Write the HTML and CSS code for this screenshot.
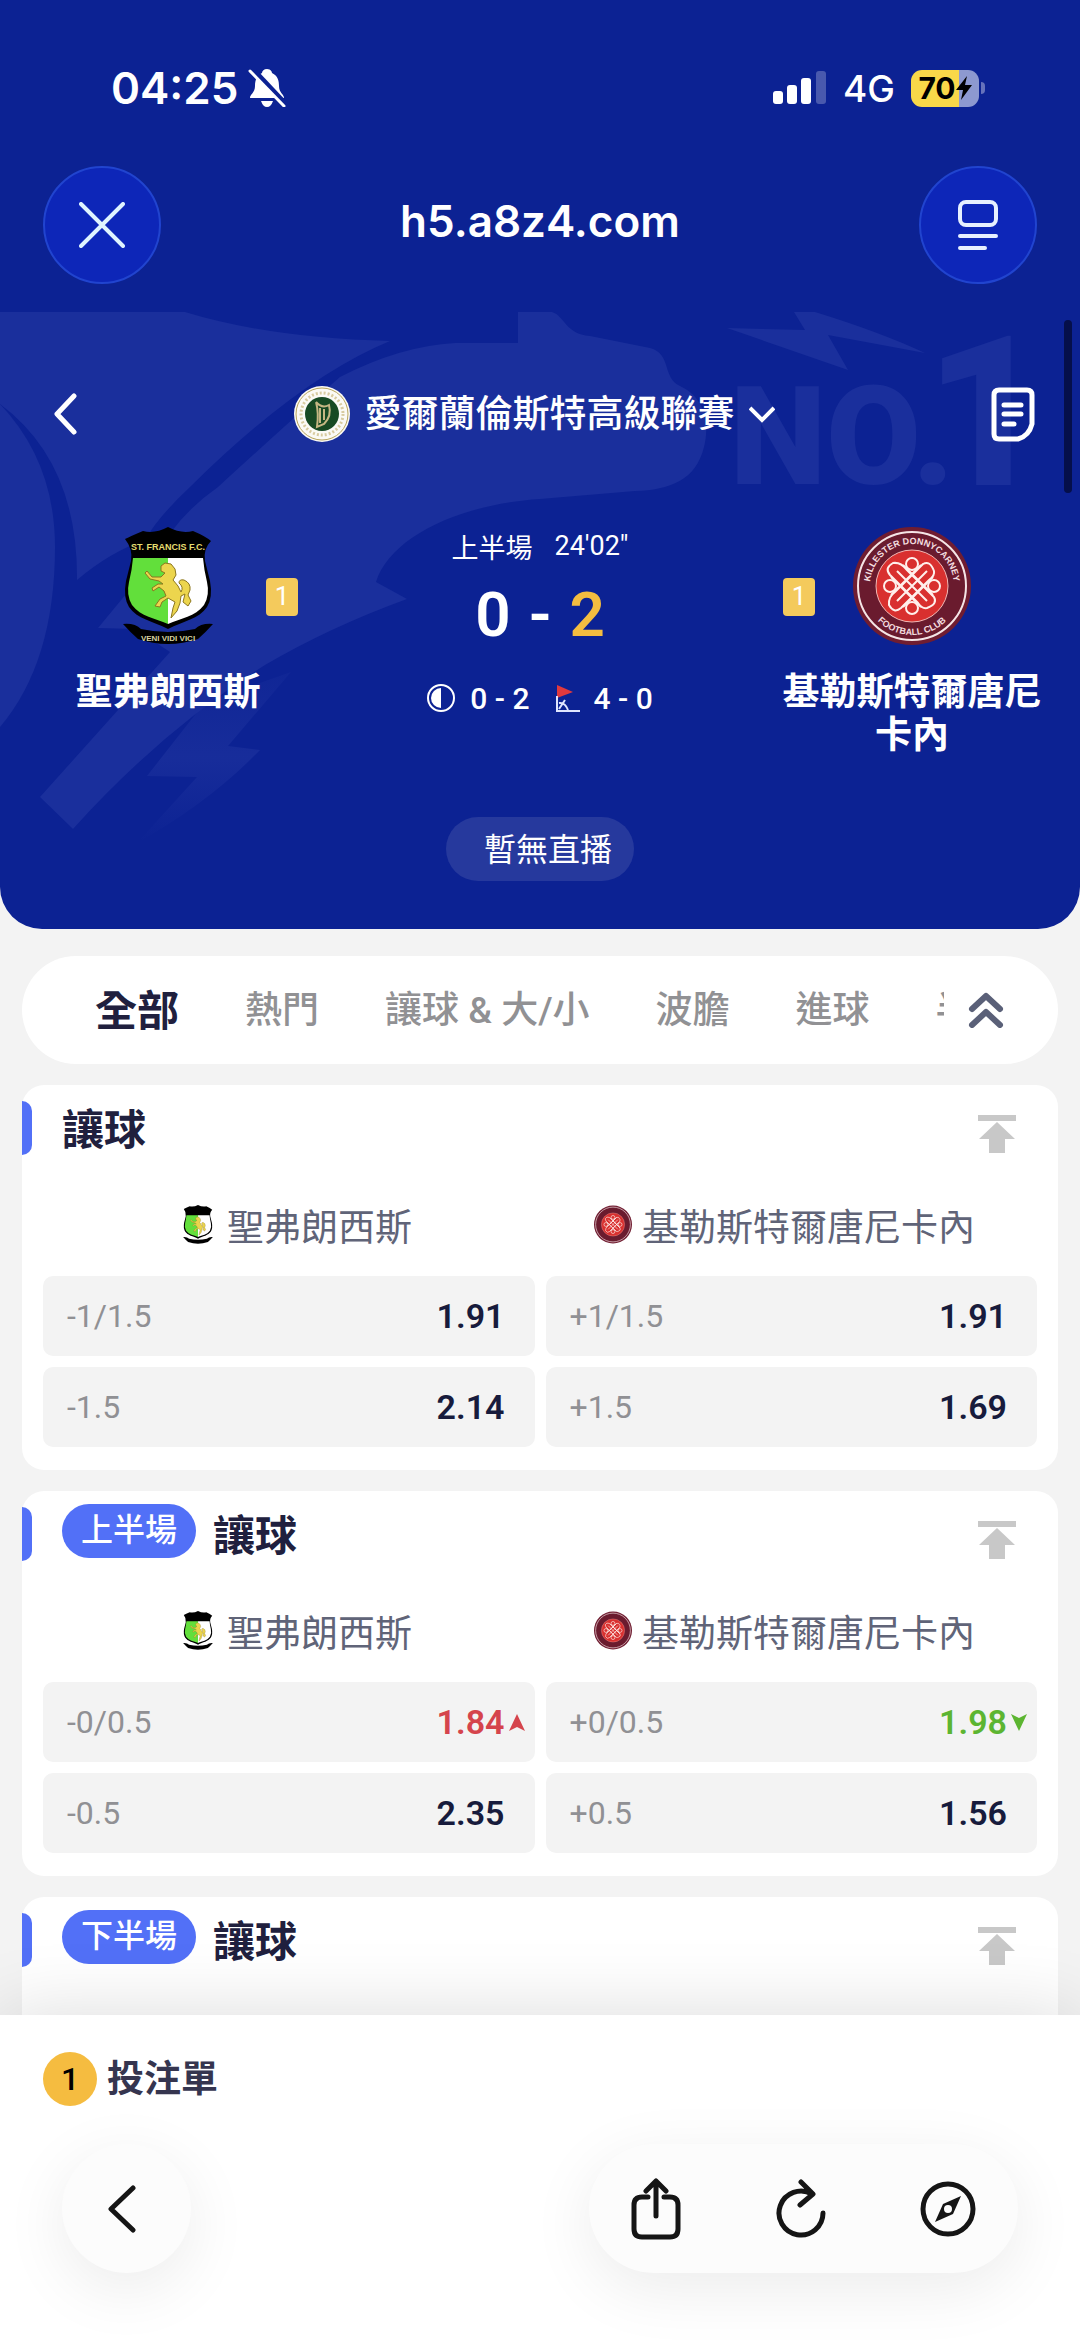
FILE: index.html
```html
<!DOCTYPE html>
<html lang="zh-Hant">
<head>
    <meta charset="UTF-8">
    <meta name="viewport" content="width=device-width, initial-scale=1.0">
    <title>h5.a8z4.com</title>
    <link rel="stylesheet" href="styles.css">
</head>
<body>
<!-- shared icons -->
<svg class="defs" width="0" height="0" aria-hidden="true">
    <symbol id="francis" viewBox="0 0 90 118">
        <path d="M2 12Q8 9 20 4Q32 7 45 0Q58 7 70 4Q82 9 88 14Q80 22 82 34Q84 42 87 54Q90 70 84 80C76 92 60 94 45 102C30 94 14 92 6 80Q0 70 3 54Q6 42 8 34Q10 22 2 12Z" fill="#000"/>
        <path d="M10 31H45V97C32 91 18 90 9 78Q3 68 6 55Q9 43 10 31Z" fill="#62df3b"/>
        <path d="M45 31H80Q81 43 84 55Q87 68 81 78C72 90 58 91 45 97Z" fill="#fff"/>
        <path d="M38 39L42 36L48 37L52 42L53 48L50 53L55 59L58 65Q61 60 56 56Q56 52 61 53Q68 56 67 63L65 68L68 74L65 79L60 75L62 67L58 69L57 76L54 84L48 91L50 81L52 75L45 71L39 75L37 80L32 79L37 72L43 69L41 64L36 60L30 64L29 61L35 57L40 57L36 54L27 52L22 46L24 44L29 50L38 50L42 46L38 44Z" fill="#ecd54d" stroke="#8c7720" stroke-width="1"/>
        <path d="M0 97Q12 96 18 102Q45 108 72 102Q78 96 90 97Q82 106 75 112Q45 122 15 112Q8 106 0 97Z" fill="#000"/>
    </symbol>
    <symbol id="killester" viewBox="0 0 118 118">
        <circle cx="59" cy="59" r="59" fill="#701d31"/>
        <circle cx="59" cy="59" r="54" fill="#6a1b2e" stroke="#f5e5e6" stroke-width="2"/>
        <circle cx="59" cy="59" r="36" fill="#d9302f" stroke="#f3b8b4" stroke-width="1"/>
        <g fill="none" stroke="#fff0ec" stroke-width="2">
            <path id="knot" d="M48 59L70 37Q77 33 81 44Q82 49 76 53L48 81Q41 87 36 78Q35 70 42 65L70 37"/>
            <use href="#knot" transform="rotate(90 59 59)"/>
            <path d="M44 44L74 74M74 44L44 74M50 38L80 68M38 50L68 80M68 38L38 68M80 50L50 80"/>
            <circle cx="59" cy="37" r="6"/><circle cx="59" cy="81" r="6"/><circle cx="37" cy="59" r="6"/><circle cx="81" cy="59" r="6"/>
        </g>
    </symbol>
    <symbol id="to-top" viewBox="0 0 38 38">
        <path d="M0 0H38V6H0ZM19 7L37 24H27V38H11V24H1Z" fill="#c8c8c8"/>
    </symbol>
</svg>

<div class="app">
    <header>
        <div class="status">
            <div class="status-side">
                <span class="time">04:25</span>
                <svg width="38" height="38" viewBox="0 0 38 38"><path d="M19 0C23 0 24 3 24 4C30 7 31 12 31 17C31 24 36 25 36 29H2C2 25 7 24 7 17C7 11 9 6 14 4C14 2 16 0 19 0Z" fill="#fff"/><path d="M13 32H25Q23 38 19 38Q15 38 13 32Z" fill="#fff"/><path d="M4 0L38 36" stroke="#0c2293" stroke-width="6"/><path d="M2 2L36 37" stroke="#fff" stroke-width="3" stroke-linecap="round"/></svg>
            </div>
            <div class="status-side">
                <svg width="54" height="34" viewBox="0 0 54 34" fill="#fff"><rect y="20" width="10" height="13" rx="3"/><rect x="14" y="14" width="10" height="19" rx="3"/><rect x="28" y="7" width="10" height="26" rx="3"/><rect x="43" width="10" height="33" rx="3" opacity=".25"/></svg>
                <span class="network">4G</span>
                <div class="battery"><span>70</span><svg width="16" height="24" viewBox="0 0 16 24"><path d="M11 0L0 14H7L5 24L16 9H9Z" fill="#000"/></svg></div>
            </div>
        </div>

        <div class="browser-bar">
            <button class="round" aria-label="關閉"><svg width="46" height="46" viewBox="0 0 46 46" stroke="#dff4ff" stroke-width="4" stroke-linecap="round"><path d="M2 2L44 44M44 2L2 44"/></svg></button>
            <span class="site">h5.a8z4.com</span>
            <button class="round" aria-label="選單"><svg width="40" height="50" viewBox="0 0 40 50" fill="none" stroke="#e6f0ff" stroke-width="4" stroke-linecap="round"><rect x="2" y="2" width="36" height="23" rx="6"/><path d="M2 36H38M2 48H27"/></svg></button>
        </div>

        <section class="match">
            <svg class="art" viewBox="0 0 1080 617" preserveAspectRatio="xMidYMin slice" aria-hidden="true">
                <linearGradient id="fade" x1="0" y1="0" x2="0" y2="1">
                    <stop offset="0" stop-color="#1a2f9c" stop-opacity=".3"/>
                    <stop offset=".5" stop-color="#1a2f9c" stop-opacity=".8"/>
                    <stop offset="1" stop-color="#1a2f9c" stop-opacity="0"/>
                </linearGradient>
                <g fill="#1a2f9c">
                    <path d="M0 0H185Q270 26 390 29Q300 66 190 175Q158 205 145 228Q110 240 77 268Q78 150 0 92Z"/>
                    <path d="M518 0H552C565 4 565 22 590 24L650 36C672 42 662 66 680 74C710 88 708 120 704 135C696 168 670 178 635 179L540 187C460 192 390 225 376 270L407 287Q330 315 265 353Q160 420 73 517L40 485L170 340L135 317L98 316L155 247Q175 205 218 175Q300 100 340 65Q400 34 455 31H518Z"/>
                    <path d="M0 92Q55 150 55 235Q55 350 0 415Z"/>
                    <path d="M291 360L228 434L260 438Q210 490 137 531L197 465L147 464L205 390Z" fill="url(#fade)"/>
                    <path d="M794 0H815Q880 20 925 41L828 23L848 58L727 16L805 18Z"/>
                </g>
                <text x="730" y="172" class="art-no">NO.</text>
                <text x="925" y="173" class="art-one">1</text>
            </svg>

            <div class="league">
                <button class="plain" aria-label="返回"><svg width="24" height="42" viewBox="0 0 24 42" fill="none" stroke="#fff" stroke-width="5" stroke-linecap="round" stroke-linejoin="round"><path d="M21 3L4 21L21 39"/></svg></button>
                <button class="plain league-name">
                    <svg width="57" height="57" viewBox="0 0 57 57"><circle cx="28" cy="28" r="28" fill="#fbfaf5"/><circle cx="28" cy="28" r="26" fill="none" stroke="#b7a45b"/><circle cx="28" cy="28" r="21" fill="none" stroke="#d8cba0" stroke-width="3" stroke-dasharray="2 2"/><circle cx="28" cy="28" r="17" fill="#174a23"/><path d="M22 16Q25 27 23 41L30 38Q38 30 35 19Q28 23 22 16M26 22V37M30 23V34" fill="none" stroke="#c5b783" stroke-width="2"/></svg>
                    <span>愛爾蘭倫斯特高級聯賽</span>
                    <svg width="26" height="17" viewBox="0 0 26 17" fill="none" stroke="#fff" stroke-width="4"><path d="M1 2L13 14L25 2"/></svg>
                </button>
                <button class="plain" aria-label="注單"><svg width="44" height="55" viewBox="0 0 44 55" fill="none" stroke="#fff" stroke-width="5" stroke-linecap="round"><path d="M8 3H36Q41 3 41 8V37Q38 49 27 52H8Q3 52 3 47V8Q3 3 8 3Z"/><path d="M13 18H30M13 27H30M13 37H23"/></svg></button>
            </div>

            <div class="scoreboard">
                <div class="team">
                    <div class="crest">
                        <svg width="90" height="118" viewBox="0 0 90 118">
                            <use href="#francis"/>
                            <text x="45" y="23" font-size="9" fill="#e6dd70">ST. FRANCIS F.C.</text>
                            <text x="45" y="114" font-size="8" fill="#d7d2a0">VENI VIDI VICI</text>
                        </svg>
                    </div>
                    <h2>聖弗朗西斯</h2>
                    <span class="card-count home">1</span>
                </div>
                <div class="score">
                    <div class="period"><span>上半場</span><span>24'02"</span></div>
                    <div class="goals"><span>0</span><span>-</span><span class="lead">2</span></div>
                    <div class="stats">
                        <svg width="29" height="29" viewBox="0 0 29 29"><circle cx="14" cy="14" r="13" fill="none" stroke="#fff" stroke-width="2"/><path d="M14 4A10 10 0 0 0 14 24Z" fill="#fff"/></svg>
                        <span>0 - 2</span>
                        <svg class="corner" width="24" height="27" viewBox="0 0 24 27"><path d="M1 0L17 7L1 13Z" fill="#e0393e"/><path d="M1 11V26H24M3 18Q9 17 12 25M3 24L9 15" fill="none" stroke="#dfe5ff" stroke-width="2"/></svg>
                        <span>4 - 0</span>
                    </div>
                </div>
                <div class="team">
                    <div class="crest">
                        <svg width="118" height="118" viewBox="0 0 118 118">
                            <path id="arc-top" d="M17 59A42 42 0 0 1 101 59" fill="none"/>
                            <path id="arc-bottom" d="M10 59A49 49 0 0 0 108 59" fill="none"/>
                            <use href="#killester"/>
                            <text font-size="9" fill="#f5dfe0"><textPath href="#arc-top" startOffset="50%">KILLESTER DONNYCARNEY</textPath></text>
                            <text font-size="9" fill="#f5dfe0"><textPath href="#arc-bottom" startOffset="50%">FOOTBALL CLUB</textPath></text>
                        </svg>
                    </div>
                    <h2>基勒斯特爾唐尼卡內</h2>
                    <span class="card-count away">1</span>
                </div>
            </div>

            <button class="live">暫無直播</button>
        </section>
        <div class="scrollbar"></div>
    </header>

    <main>
        <nav class="tabs">
            <div class="tab-list">
                <a href="#" class="active">全部</a>
                <a href="#">熱門</a>
                <a href="#">讓球 &amp; 大/小</a>
                <a href="#">波膽</a>
                <a href="#">進球</a>
                <a href="#">半場</a>
            </div>
            <button class="plain" aria-label="收合"><svg width="36" height="36" viewBox="0 0 36 36" fill="none" stroke="#5a6078" stroke-width="6" stroke-linecap="round" stroke-linejoin="round"><path d="M4 17L18 4L32 17M4 33L18 20L32 33"/></svg></button>
        </nav>

        <section class="market">
            <div class="market-head">
                <h3>讓球</h3>
                <button class="plain" aria-label="置頂"><svg width="38" height="38"><use href="#to-top"/></svg></button>
            </div>
            <div class="teams">
                <div><svg width="38" height="39"><use href="#francis"/></svg>聖弗朗西斯</div>
                <div><svg width="38" height="39"><use href="#killester"/></svg>基勒斯特爾唐尼卡內</div>
            </div>
            <div class="odds">
                <button><span>-1/1.5</span><b>1.91</b></button>
                <button><span>+1/1.5</span><b>1.91</b></button>
                <button><span>-1.5</span><b>2.14</b></button>
                <button><span>+1.5</span><b>1.69</b></button>
            </div>
        </section>

        <section class="market">
            <div class="market-head">
                <span class="half">上半場</span>
                <h3>讓球</h3>
                <button class="plain" aria-label="置頂"><svg width="38" height="38"><use href="#to-top"/></svg></button>
            </div>
            <div class="teams">
                <div><svg width="38" height="39"><use href="#francis"/></svg>聖弗朗西斯</div>
                <div><svg width="38" height="39"><use href="#killester"/></svg>基勒斯特爾唐尼卡內</div>
            </div>
            <div class="odds">
                <button class="up"><span>-0/0.5</span><b>1.84</b><svg class="trend" width="16" height="17" viewBox="0 0 16 17"><path d="M8 0L16 17L8 13L0 17Z" fill="#d5444c"/></svg></button>
                <button class="down"><span>+0/0.5</span><b>1.98</b><svg class="trend" width="16" height="17" viewBox="0 0 16 17"><path d="M8 17L16 0L8 4L0 0Z" fill="#5cb531"/></svg></button>
                <button><span>-0.5</span><b>2.35</b></button>
                <button><span>+0.5</span><b>1.56</b></button>
            </div>
        </section>

        <section class="market">
            <div class="market-head">
                <span class="half">下半場</span>
                <h3>讓球</h3>
                <button class="plain" aria-label="置頂"><svg width="38" height="38"><use href="#to-top"/></svg></button>
            </div>
        </section>
    </main>

    <footer>
        <a href="#" class="slip"><span>1</span><strong>投注單</strong></a>
        <div class="toolbar">
            <button class="tool-back" aria-label="上一頁"><svg width="28" height="48" viewBox="0 0 28 48"><path d="M25 3L3 24L25 45"/></svg></button>
            <div class="tools">
                <button aria-label="分享"><svg width="50" height="62" viewBox="0 0 50 62"><path d="M17 19H11Q3 19 3 27V51Q3 59 11 59H39Q47 59 47 51V27Q47 19 39 19H33M25 38V3M15 13L25 3L35 13"/></svg></button>
                <button aria-label="重新整理"><svg width="50" height="60" viewBox="0 0 50 60"><path d="M47 34A22 22 0 1 1 36 15M25 3L37 15L24 26"/></svg></button>
                <button aria-label="瀏覽器"><svg width="56" height="56" viewBox="0 0 56 56"><circle cx="28" cy="28" r="25"/><path fill="#151515" stroke="none" fill-rule="evenodd" d="M41 15L33 33L15 41L23 23ZM28 24A4 4 0 1 0 28 32A4 4 0 1 0 28 24Z"/></svg></button>
            </div>
        </div>
    </footer>
</div>
</body>
</html>
```
FILE: styles.css
```css
* {
    box-sizing: border-box;
}
body {
    margin: 0;
    background-color: #f3f3f3;
    color: #20203e;
    font-family: Roboto, "Noto Sans CJK TC", sans-serif;
}
h2, h3 {
    margin: 0;
}
button {
    border: none;
    font-family: inherit;
    cursor: pointer;
}
a {
    color: inherit;
    text-decoration: none;
}
svg {
    display: block;
    flex-shrink: 0;
}
.defs {
    position: absolute;
}
.plain {
    display: flex;
    align-items: center;
    padding: 0;
    background: none;
    color: inherit;
}
.app {
    display: flex;
    flex-direction: column;
    height: 100vh;
    overflow: hidden;
}

/* header */
header {
    position: relative;
    flex-shrink: 0;
    overflow: hidden;
    background-color: #0c2293;
    color: #fff;
    border-radius: 0 0 42px 42px;
}
.status {
    display: flex;
    justify-content: space-between;
    padding: 60px 101px 0 111px;
    height: 116px;
    font-family: Inter, sans-serif;
}
.status-side {
    display: flex;
    align-items: center;
    height: 56px;
}
.time {
    margin-right: 10px;
    font-size: 44px;
    font-weight: 600;
}
.network {
    margin: 0 16px;
    font-size: 37px;
    font-weight: 500;
}
.battery {
    position: relative;
    display: flex;
    align-items: center;
    justify-content: center;
    width: 68px;
    height: 37px;
    border-radius: 11px;
    background: linear-gradient(to right, #f9d849 70%, #8d99d0 70%);
    color: #000;
    font-size: 30px;
    font-weight: 700;
}
.battery::after {
    content: "";
    position: absolute;
    right: -6px;
    width: 4px;
    height: 12px;
    border-radius: 0 4px 4px 0;
    background-color: #6672bb;
}
.browser-bar {
    display: flex;
    justify-content: space-between;
    align-items: center;
    height: 196px;
    padding: 22px 43px 0;
}
.round {
    display: flex;
    align-items: center;
    justify-content: center;
    width: 118px;
    height: 118px;
    border: 2px solid #2144cf;
    border-radius: 50%;
    background-color: #0d26b8;
}
.site {
    padding-bottom: 8px;
    font-family: Inter, sans-serif;
    font-size: 44px;
    font-weight: 600;
}
.match {
    position: relative;
    display: flex;
    flex-direction: column;
    align-items: center;
    padding: 70px 0 48px;
}
.art {
    position: absolute;
    top: 0;
    left: 0;
    width: 100%;
    height: 100%;
}
.art text {
    fill: #1a2f9c;
    font-weight: 900;
}
.art-no {
    font-size: 137px;
}
.art-one {
    font-size: 210px;
}
.league {
    position: relative;
    display: flex;
    justify-content: space-between;
    align-items: center;
    width: 100%;
    height: 64px;
    padding: 0 45px 0 53px;
}
.league-name {
    gap: 14px;
    font-size: 37px;
    font-weight: 500;
}
.league-name span {
    padding-bottom: 6px;
}
.scoreboard {
    position: relative;
    display: flex;
    justify-content: space-between;
    width: 100%;
    margin-top: 81px;
}
.team {
    position: relative;
    width: 336px;
    padding: 0 30px;
    text-align: center;
}
.crest {
    display: flex;
    justify-content: center;
}
.crest text {
    font-family: "Liberation Sans", sans-serif;
    font-weight: 700;
    text-anchor: middle;
}
.team h2 {
    margin-top: 26px;
    font-size: 37px;
    line-height: 43px;
}
.card-count {
    position: absolute;
    top: 51px;
    width: 32px;
    height: 38px;
    border-radius: 4px;
    background-color: #f4ca5c;
    font-size: 26px;
    line-height: 36px;
}
.home {
    right: 38px;
}
.away {
    left: 39px;
}
.score {
    display: flex;
    flex-direction: column;
    align-items: center;
}
.period {
    display: flex;
    align-items: center;
    gap: 22px;
    height: 38px;
    font-size: 27px;
}
.goals {
    display: flex;
    align-items: center;
    gap: 18px;
    height: 98px;
    font-size: 62px;
    font-weight: 600;
}
.lead {
    color: #f4bd40;
}
.stats {
    display: flex;
    align-items: center;
    gap: 14px;
    height: 70px;
    font-size: 30px;
    font-weight: 500;
}
.corner {
    margin-left: 12px;
}
.live {
    position: relative;
    height: 64px;
    margin-top: 60px;
    padding: 0 22px 4px 38px;
    border-radius: 32px;
    background-color: #26399d;
    color: #fff;
    font-size: 32px;
}
.scrollbar {
    position: absolute;
    top: 320px;
    right: 8px;
    width: 8px;
    height: 173px;
    border-radius: 4px;
    background-color: #050f4a;
}

/* markets */
main {
    display: flex;
    flex: 1;
    flex-direction: column;
    gap: 21px;
    min-height: 0;
    padding: 27px 22px 0;
    overflow: hidden;
}
.tabs {
    display: flex;
    flex-shrink: 0;
    align-items: center;
    height: 108px;
    padding: 0 54px 0 73px;
    border-radius: 54px;
    background-color: #fff;
}
.tab-list {
    display: flex;
    flex: 1;
    align-items: center;
    gap: 66px;
    min-width: 0;
    margin-right: 24px;
    padding-bottom: 6px;
    overflow: hidden;
    color: #919194;
    font-size: 37px;
    font-weight: 500;
    white-space: nowrap;
}
.tab-list .active {
    color: #20203e;
    font-size: 42px;
    font-weight: 700;
}
.market {
    flex-shrink: 0;
    min-height: 385px;
    padding-bottom: 22px;
    border-radius: 22px;
    background-color: #fff;
}
.market-head {
    position: relative;
    display: flex;
    align-items: center;
    height: 88px;
    padding: 0 42px 0 40px;
}
.market-head::before {
    content: "";
    position: absolute;
    top: 16px;
    left: 0;
    width: 10px;
    height: 54px;
    border-radius: 0 11px 11px 0;
    background-color: #5270f7;
}
.market-head h3 {
    padding-top: 4px;
    font-size: 42px;
    line-height: 54px;
}
.market-head button {
    margin: 10px 0 0 auto;
}
.half {
    height: 54px;
    margin: 0 17px 8px 0;
    padding: 0 19px;
    border-radius: 27px;
    background-color: #5270f7;
    color: #fff;
    font-size: 32px;
    font-weight: 500;
    line-height: 52px;
}
.teams {
    display: grid;
    grid-template-columns: 1fr 1fr;
    height: 103px;
    padding: 0 29px;
    color: #606478;
    font-size: 37px;
}
.teams div {
    display: flex;
    align-items: center;
    justify-content: center;
    gap: 10px;
}
.odds {
    display: grid;
    grid-template-columns: 1fr 1fr;
    gap: 11px;
    padding: 0 21px;
}
.odds button {
    position: relative;
    display: flex;
    align-items: center;
    justify-content: space-between;
    height: 80px;
    padding: 0 30px 0 24px;
    border-radius: 10px;
    background-color: #f3f3f3;
    color: #909094;
    font-size: 32px;
}
.odds b {
    color: #171b3c;
    font-size: 34px;
    font-weight: 600;
}
.odds .up b {
    color: #d5444c;
}
.odds .down b {
    color: #5cb531;
}
.trend {
    position: absolute;
    right: 10px;
}

/* bottom bar */
footer {
    position: relative;
    flex-shrink: 0;
    padding: 37px 62px 75px;
    background-color: #fff;
    box-shadow: 0 0 72px rgba(0, 0, 0, 0.14);
}
.slip {
    display: flex;
    align-items: center;
    gap: 10px;
    height: 54px;
    margin-left: -19px;
    color: #35354f;
    font-size: 37px;
}
.slip strong {
    padding-bottom: 6px;
}
.slip span {
    width: 54px;
    border-radius: 50%;
    background-color: #f5bc40;
    color: #000;
    font-size: 32px;
    font-weight: 500;
    line-height: 54px;
    text-align: center;
}
.toolbar {
    display: flex;
    justify-content: space-between;
    margin-top: 38px;
}
.toolbar svg {
    fill: none;
    stroke: #151515;
    stroke-width: 5px;
    stroke-linecap: round;
    stroke-linejoin: round;
}
.toolbar button {
    display: flex;
    align-items: center;
    justify-content: center;
    padding: 0;
    background: none;
}
.toolbar .tool-back,
.tools {
    height: 129px;
    border-radius: 65px;
    background-color: #fcfcfc;
    box-shadow: 0 16px 64px rgba(0, 0, 0, 0.08);
}
.toolbar .tool-back {
    width: 129px;
    padding-right: 10px;
}
.tools {
    display: flex;
    justify-content: space-between;
    padding: 0 42px;
    width: 429px;
}
```
